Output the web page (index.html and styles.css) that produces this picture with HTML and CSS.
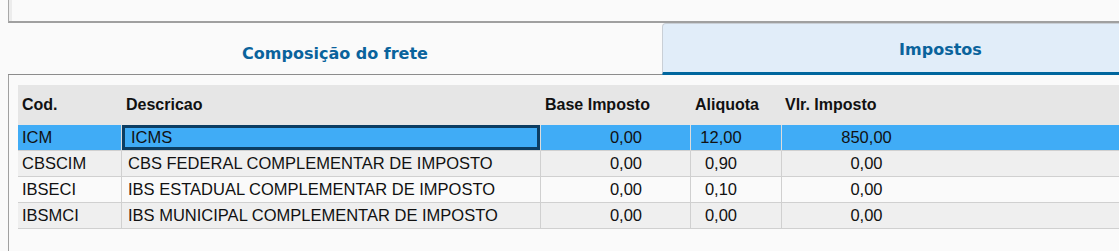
FILE: index.html
```html
<!DOCTYPE html>
<html lang="pt-BR">
<head>
  <meta charset="UTF-8">
  <title>Impostos</title>
  <link rel="stylesheet" href="styles.css">
</head>
<body>

  <div class="top-panel"></div>

  <div class="tabs">
    <div class="tab">Composição do frete</div>
    <div class="tab active">Impostos</div>
  </div>

  <div class="panel">
    <div class="grid">
      <div class="head">Cod.</div>
      <div class="head">Descricao</div>
      <div class="head">Base Imposto</div>
      <div class="head">Aliquota</div>
      <div class="head vlr">Vlr. Imposto</div>

      <div class="row selected">
        <div class="cell">ICM</div>
        <div class="cell desc focus">ICMS</div>
        <div class="cell base">0,00</div>
        <div class="cell aliq">12,00</div>
        <div class="cell vlr">850,00</div>
      </div>
      <div class="row odd">
        <div class="cell">CBSCIM</div>
        <div class="cell desc">CBS FEDERAL COMPLEMENTAR DE IMPOSTO</div>
        <div class="cell base">0,00</div>
        <div class="cell aliq">0,90</div>
        <div class="cell vlr">0,00</div>
      </div>
      <div class="row">
        <div class="cell">IBSECI</div>
        <div class="cell desc">IBS ESTADUAL COMPLEMENTAR DE IMPOSTO</div>
        <div class="cell base">0,00</div>
        <div class="cell aliq">0,10</div>
        <div class="cell vlr">0,00</div>
      </div>
      <div class="row odd">
        <div class="cell">IBSMCI</div>
        <div class="cell desc">IBS MUNICIPAL COMPLEMENTAR DE IMPOSTO</div>
        <div class="cell base">0,00</div>
        <div class="cell aliq">0,00</div>
        <div class="cell vlr">0,00</div>
      </div>
    </div>
  </div>

</body>
</html>
```

FILE: styles.css
```css
body {
  margin: 0;
  background: #fafafa;
  font-family: "Liberation Sans", Arial, sans-serif;
  font-size: 16px;
  color: #111;
  overflow: hidden;
  height: 251px;
}
.top-panel {
  margin-left: 8px;
  height: 21px;
  border-left: 1px solid #a8a8a8;
  border-bottom: 2px solid #a0a0a0;
  box-shadow: inset 3px 0 0 #ececec;
}
.tabs {
  display: flex;
  margin-left: 8px;
  height: 52px;
  overflow: hidden;
}
.tab {
  flex: none;
  box-sizing: border-box;
  width: 654px;
  height: 52px;
  padding-top: 20px;
  line-height: 22px;
  text-align: center;
  font-family: "DejaVu Sans", Verdana, sans-serif;
  font-weight: bold;
  font-size: 16px;
  color: #0a639c;
  border-bottom: 1px solid #8c8c8c;
}
.tab.active {
  width: 556px;
  padding-top: 15px;
  background: #e1edf9;
  border: 1px solid #c9cfd6;
  border-right: none;
  border-bottom: 3px solid #00669e;
  border-top-left-radius: 4px;
}
.panel {
  margin-left: 8px;
  height: 166px;
  border-left: 1px solid #a0a0a0;
  padding: 10px 0 0 9px;
  overflow: hidden;
}
.grid {
  display: grid;
  grid-template-columns: 104px 419px 150px 91px 1fr;
}
.head {
  height: 40px;
  line-height: 40px;
  background: #e6e6e6;
  font-weight: bold;
  padding-left: 4px;
}
.head.vlr {
  padding-left: 3px;
}
.row {
  display: contents;
}
.cell {
  height: 25px;
  line-height: 25px;
  font-size: 16.5px;
  border-bottom: 1px solid #d0d0d0;
  border-right: 1px solid #d0d0d0;
  background: #fafafa;
  padding-left: 4px;
  white-space: nowrap;
}
.row.odd .cell {
  background: #efefef;
}
.row.selected .cell {
  background: #40acf6;
  border-right-color: #dcdcdc;
}
.cell.desc {
  padding-left: 6px;
}
.cell.focus {
  padding-left: 9px;
  box-shadow: inset 0 0 0 3px #0c3d62;
}
.cell.base {
  text-align: right;
  padding: 0 48px 0 0;
}
.cell.aliq {
  text-align: center;
  padding: 0 30px 0 0;
}
.grid .cell.vlr {
  border-right: none;
  text-align: center;
  padding: 0 168px 0 0;
}
```
